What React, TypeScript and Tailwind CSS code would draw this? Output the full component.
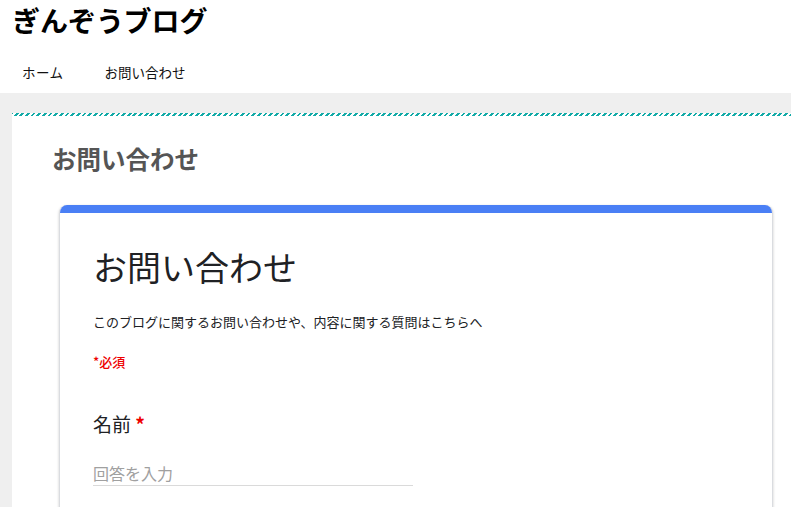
import React from "react";

const jp = "font-['Noto_Sans_CJK_JP','Noto_Sans',sans-serif]";

export default function App() {
  return (
    <div className={`min-h-[507px] bg-[#efefef] ${jp}`}>
      {/* Site header */}
      <header className="h-[93px] bg-white">
        <h1 className="pl-[12px] pt-[2px] text-[28px] leading-[36px] font-bold text-black">ぎんぞうブログ</h1>
        <nav className="mt-[24px] flex text-[13.5px] leading-[20px] text-[#111]">
          <a className="pl-[22px] pr-[41px] tracking-[0.5px]">ホーム</a>
          <a>お問い合わせ</a>
        </nav>
      </header>

      {/* Main area */}
      <main className="pl-[12px] pt-[20px]">
        <div className="bg-white pb-[40px]">
          <div className="h-[3px] bg-[repeating-linear-gradient(-45deg,#13aaa7_0_2px,#fff_2px_4px)]" />
          <h2 className="pl-[40px] pt-[27px] text-[24.5px] leading-[32px] font-bold text-[#555]">お問い合わせ</h2>

          {/* Embedded form */}
          <div className="ml-[47px] mt-[30px] w-[714px] overflow-hidden rounded-t-[8px] border-x border-[#dadce0] bg-white shadow-[0_1px_3px_rgba(0,0,0,0.2)]">
            <div className="h-[8px] bg-[#4a7ff5]" />
            <div className="pl-[33px] pt-[33px] pb-[40px]">
              <h3 className="text-[34px] leading-[42px] text-[#202124]">お問い合わせ</h3>
              <p className="mt-[24px] text-[13px] leading-[20px] text-[#202124]">
                このブログに関するお問い合わせや、内容に関する質問はこちらへ
              </p>
              <p className="mt-[20px] text-[13px] leading-[20px] font-medium text-[#e00]">*必須</p>
              <div className="mt-[38px] text-[19px] leading-[28px] text-[#202124]">
                名前 <span className="font-bold text-[#e00]">*</span>
              </div>
              <div className="mt-[23px] w-[320px] border-b border-[#dadada] text-[16px] leading-[24px] text-[#a0a0a0]">
                回答を入力
              </div>
            </div>
          </div>
        </div>
      </main>
    </div>
  );
}
